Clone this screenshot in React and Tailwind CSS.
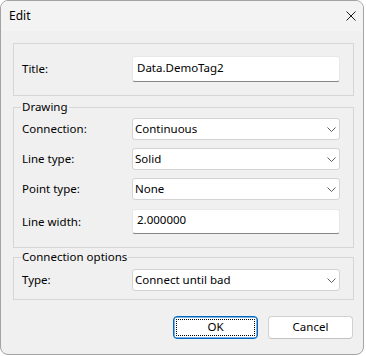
import React from "react";

function Chevron() {
  return (
    <svg width="9" height="5" viewBox="0 0 9 5" className="block">
      <path d="M0.5 0.5 L4.5 4.5 L8.5 0.5" fill="none" stroke="#5f5f5f" strokeWidth="1" />
    </svg>
  );
}

function Combo({ value }) {
  return (
    <div className="h-[22px] w-[208px] bg-white border border-[#d3d3d3] rounded-[3px] flex items-center justify-between pl-[2px] pr-[3px]">
      <span className="leading-none">{value}</span>
      <Chevron />
    </div>
  );
}

function TextBox({ value, h }) {
  return (
    <div
      className={`${h} w-[208px] bg-white border border-[#e8e8e8] border-b-[#858585] rounded-[3px] flex items-center pl-[4px]`}
    >
      <span className="leading-none -mt-[3px]">{value}</span>
    </div>
  );
}

function Row({ label, children }) {
  return (
    <div className="grid grid-cols-[110px_208px] items-center pl-[8px]">
      <span>{label}</span>
      {children}
    </div>
  );
}

function Group({ legend, className, children }) {
  return (
    <div className={`relative w-[341px] border border-[#d6d6d6] ${className}`}>
      {legend && (
        <span className="absolute left-[7px] top-[-9px] leading-[16px] px-[1px] bg-[#f0f0f0]">
          {legend}
        </span>
      )}
      {children}
    </div>
  );
}

export default function App() {
  return (
    <div className="w-[364px] h-[355px] bg-[#f0f0f0] border border-[#a3a3a3] rounded-[8px] overflow-hidden flex flex-col font-['Noto_Sans',sans-serif] text-[11.5px] text-black">
      <div className="h-[30px] shrink-0 bg-[#f3f3f3] flex items-center justify-between pl-[8px] pr-[7px]">
        <span className="text-[12px]">Edit</span>
        <svg width="10" height="10" viewBox="0 0 10 10" className="block">
          <path d="M0.5 0.5 L9.5 9.5 M9.5 0.5 L0.5 9.5" fill="none" stroke="#1a1a1a" strokeWidth="1" />
        </svg>
      </div>
      <div className="flex flex-col pl-[12px]">
        <Group className="mt-[12px] h-[53px] pt-[12px]">
          <Row label="Title:">
            <TextBox value="Data.DemoTag2" h="h-[26px]" />
          </Row>
        </Group>
        <Group legend="Drawing" className="mt-[11px] h-[141px] pt-[10px] flex flex-col gap-[8px]">
          <Row label="Connection:">
            <Combo value="Continuous" />
          </Row>
          <Row label="Line type:">
            <Combo value="Solid" />
          </Row>
          <Row label="Point type:">
            <Combo value="None" />
          </Row>
          <div className="mt-[1px]">
            <Row label="Line width:">
              <TextBox value="2.000000" h="h-[25px]" />
            </Row>
          </div>
        </Group>
        <Group legend="Connection options" className="mt-[9px] h-[43px] pt-[11px]">
          <Row label="Type:">
            <Combo value="Connect until bad" />
          </Row>
        </Group>
        <div className="w-[341px] mt-[16px] flex justify-end gap-[10px] pr-[1px]">
          <button className="relative w-[85px] h-[23px] bg-white border border-[#0067c0] shadow-[inset_0_0_0_0.5px_#0067c0] rounded-[4px] flex items-center justify-center">
            <span className="absolute inset-[2px] border border-dotted border-black rounded-[1px]" />
            <span className="leading-none -mt-[1px]">OK</span>
          </button>
          <button className="w-[85px] h-[23px] bg-white border border-[#d0d0d0] border-b-[#c2c2c2] rounded-[4px] flex items-center justify-center">
            <span className="leading-none -mt-[1px]">Cancel</span>
          </button>
        </div>
      </div>
    </div>
  );
}
